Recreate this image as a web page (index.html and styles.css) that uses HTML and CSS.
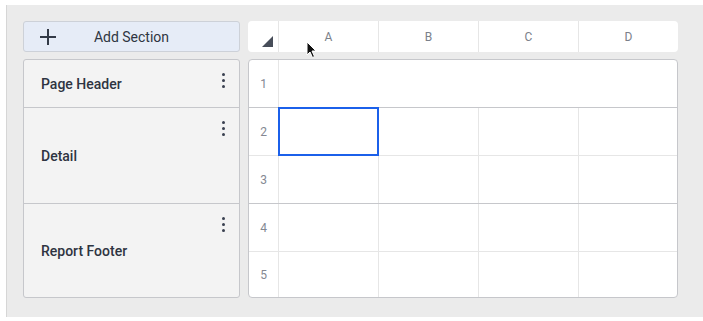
FILE: index.html
```html
<!DOCTYPE html>
<html>
<head>
<meta charset="utf-8">
<link rel="stylesheet" href="styles.css">
</head>
<body>
<div class="panel">
  <div class="layout">
    <button class="add-btn">
      <svg class="plus" width="16" height="16" viewBox="0 0 16 16"><path d="M8 0v16M0 8h16" stroke="#333a47" stroke-width="2"/></svg>
      <span class="add-label">Add Section</span>
      <span></span>
    </button>
    <div class="col-header">
      <div class="corner"><svg width="11" height="11" viewBox="0 0 11 11"><path d="M11 0V11H0Z" fill="#474d59"/></svg></div>
      <div class="col-label">A</div>
      <div class="col-label">B</div>
      <div class="col-label">C</div>
      <div class="col-label">D</div>
      <svg class="cursor" width="12" height="18" viewBox="0 0 12 18"><path d="M1 1V14L4 11L6.5 16.5L8.5 15.5L6 10H10Z" fill="#111" stroke="#fff" stroke-width="1"/></svg>
    </div>
    <div class="sections">
      <div class="section s1"><span class="sec-label">Page Header</span><span class="kebab"><i></i><i></i><i></i></span></div>
      <div class="section s2"><span class="sec-label">Detail</span><span class="kebab"><i></i><i></i><i></i></span></div>
      <div class="section s3"><span class="sec-label">Report Footer</span><span class="kebab"><i></i><i></i><i></i></span></div>
    </div>
    <div class="grid">
      <div class="row r1 sec-end"><div class="num">1</div><div class="span"></div></div>
      <div class="row r2"><div class="num">2</div><div class="cell selected"></div><div class="cell"></div><div class="cell"></div><div class="cell"></div></div>
      <div class="row r3 sec-end"><div class="num">3</div><div class="cell"></div><div class="cell"></div><div class="cell"></div><div class="cell"></div></div>
      <div class="row r4"><div class="num">4</div><div class="cell"></div><div class="cell"></div><div class="cell"></div><div class="cell"></div></div>
      <div class="row r5 last"><div class="num">5</div><div class="cell"></div><div class="cell"></div><div class="cell"></div><div class="cell"></div></div>
    </div>
  </div>
</div>
</body>
</html>
```

FILE: styles.css
```css
* { box-sizing: border-box; }
html, body { margin: 0; padding: 0; background: #fff; overflow: hidden; }
body { font-family: Roboto, "Noto Sans", "Liberation Sans", sans-serif; }

.panel {
  margin: 5px 0 0 6px;
  height: 312px;
  background: #ebebeb;
  border-left: 1px solid #d6d6d6;
  padding: 16px 0 0 16px;
}

.layout {
  display: grid;
  grid-template-columns: 217px 430px;
  grid-template-rows: 31px 239px;
  column-gap: 8px;
  row-gap: 7px;
}

.add-btn {
  display: grid;
  grid-template-columns: 1fr auto 1fr;
  align-items: center;
  padding: 1px 0 0 16px;
  margin: 0;
  background: #e6ecf7;
  border: 1px solid #cdd1d8;
  border-radius: 3px;
  font-family: inherit;
  font-size: 14px;
  color: #2f3542;
}
.plus { justify-self: start; }
.add-label { padding-right: 16px; }

.col-header {
  position: relative;
  display: grid;
  grid-template-columns: 30px 100px 100px 100px 100px;
  background: #fff;
  border-radius: 4px;
}
.corner {
  display: flex;
  align-items: flex-end;
  justify-content: flex-end;
  padding: 0 5px 5px 0;
}
.col-label {
  border-left: 1px solid #e6e6e6;
  display: flex;
  align-items: center;
  justify-content: center;
  font-size: 12px;
  color: #7b808a;
  padding-top: 1px;
}
.cursor {
  position: absolute;
  left: 58px;
  top: 20px;
}

.sections {
  display: flex;
  flex-direction: column;
  background: #f3f3f3;
  border: 1px solid #c6c7cb;
  border-radius: 3px;
}
.section {
  display: flex;
  align-items: center;
  justify-content: space-between;
  padding: 0 14px 0 17px;
  border-bottom: 1px solid #c6c7cb;
}
.s1 { height: 48px; }
.s2 { height: 96px; }
.s3 { height: 93px; border-bottom: none; }
.sec-label {
  font-size: 14px;
  font-weight: 500;
  color: #2e3441;
  padding-top: 1px;
}
.kebab {
  align-self: flex-start;
  margin-top: 13px;
  display: flex;
  flex-direction: column;
  gap: 3px;
}
.kebab i {
  display: block;
  width: 3px;
  height: 3px;
  border-radius: 50%;
  background: #3a4050;
}

.grid {
  display: flex;
  flex-direction: column;
  background: #fff;
  border: 1px solid #c6c7cb;
  border-radius: 4px;
}
.row {
  display: grid;
  grid-template-columns: 29px 100px 100px 100px 1fr;
  height: 48px;
  border-bottom: 1px solid #e6e6e6;
}
.row.sec-end { border-bottom-color: #c6c7cb; }
.row.last { height: 45px; border-bottom: none; }
.num {
  display: flex;
  align-items: center;
  justify-content: center;
  font-size: 12px;
  color: #848892;
}
.span { grid-column: 2 / 6; border-left: 1px solid #e6e6e6; }
.cell { border-left: 1px solid #e6e6e6; position: relative; }
.selected { z-index: 1; }
.selected::after {
  content: "";
  position: absolute;
  top: -1px;
  left: -1px;
  right: -1px;
  bottom: -1px;
  border: 2px solid #1b60ea;
}
```
